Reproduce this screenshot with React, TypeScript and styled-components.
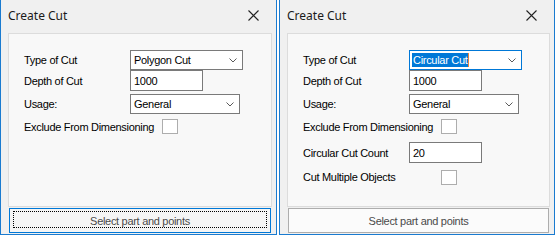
import React from "react";
import styled, { createGlobalStyle, css } from "styled-components";

const Global = createGlobalStyle`
  html, body { margin: 0; padding: 0; background: #ffffff; }
  body { width: 559px; height: 240px; overflow: hidden; }
`;

const Screen = styled.div`
  display: flex;
  gap: 2px;
  align-items: flex-start;
  width: 559px;
  height: 240px;
`;

const Dialog = styled.section<{ $w: number }>`
  width: ${(p) => p.$w}px;
  height: 235px;
  box-sizing: border-box;
  border: 1px solid #1a7bd0;
  border-top: none;
  background: #f0f0f0;
  display: flex;
  flex-direction: column;
`;

const TitleBar = styled.header`
  height: 33px;
  flex: none;
  display: flex;
  align-items: center;
  justify-content: space-between;
  padding: 0 17px 2px 7px;
  box-sizing: border-box;
`;

const Title = styled.span`
  font-family: "Noto Sans", "Segoe UI", sans-serif;
  font-size: 12px;
  color: #1a1a1a;
`;

const CloseIcon = () => (
  <svg width="11" height="11" viewBox="0 0 11 11">
    <path d="M0.5 0.5 L10.5 10.5 M10.5 0.5 L0.5 10.5" stroke="#222" strokeWidth="1.1" fill="none" />
  </svg>
);

const Panel = styled.div`
  height: 174px;
  flex: none;
  box-sizing: border-box;
  margin: 0 4px 0 7px;
  border: 1px solid #dcdcdc;
  background: #f8f8f8;
  padding: 16px 0 0 15px;
  display: flex;
  flex-direction: column;
`;

const Row = styled.div<{ $h: number; $mt?: number }>`
  display: grid;
  grid-template-columns: 106px auto;
  align-items: center;
  height: ${(p) => p.$h}px;
  margin-top: ${(p) => p.$mt ?? 0}px;
`;

const uiText = css`
  font-family: "Liberation Sans", Arial, sans-serif;
  font-size: 11px;
  letter-spacing: -0.3px;
`;

const Label = styled.span`
  ${uiText};
  color: #000;
  white-space: nowrap;
`;

const Combo = styled.div<{ $w: number; $focused?: boolean }>`
  ${uiText};
  color: #000;
  width: ${(p) => p.$w}px;
  height: 100%;
  box-sizing: border-box;
  border: 1px solid ${(p) => (p.$focused ? "#0078d7" : "#7a7a7a")};
  background: #fff;
  display: flex;
  align-items: center;
  justify-content: space-between;
  padding: 0 5px 0 2px;
`;

const Selected = styled.span<{ $sel?: boolean }>`
  display: inline-flex;
  align-items: center;
  height: 14px;
  padding: 0 1px;
  ${(p) =>
    p.$sel &&
    css`
      background: #0078d7;
      color: #fff;
      border-right: 1px solid #e8833a;
    `}
`;

const Chevron = () => (
  <svg width="8" height="5" viewBox="0 0 8 5">
    <path d="M0.5 0.5 L4 4 L7.5 0.5" stroke="#5a5a5a" strokeWidth="1" fill="none" />
  </svg>
);

const TextBox = styled.div`
  ${uiText};
  color: #000;
  width: 73px;
  height: 100%;
  box-sizing: border-box;
  border: 1px solid #7a7a7a;
  background: #fff;
  display: flex;
  align-items: center;
  padding-left: 3px;
`;

const CheckBox = styled.div`
  width: 16px;
  height: 15px;
  box-sizing: border-box;
  border: 1px solid #adadad;
  background: #fff;
  margin-left: 32px;
`;

const ButtonBar = styled.div`
  flex: 1;
  display: flex;
  padding: 1px 5px 1px 8px;
  box-sizing: border-box;
`;

const Button = styled.button<{ $focused?: boolean }>`
  ${uiText};
  flex: 1;
  position: relative;
  box-sizing: border-box;
  color: #4a4a4a;
  padding: 0;
  margin: 0;
  background: ${(p) => (p.$focused ? "#f5f5f5" : "#fbfbfb")};
  border: 1px solid ${(p) => (p.$focused ? "#0078d7" : "#adadad")};
  display: flex;
  align-items: center;
  justify-content: center;
  ${(p) =>
    p.$focused &&
    css`
      &::after {
        content: "";
        position: absolute;
        inset: 2px 3px 4px 3px;
        border: 1px dotted #000;
      }
    `}
`;

type DialogProps = { circular?: boolean; w: number };

const CutDialog = ({ circular, w }: DialogProps) => (
  <Dialog $w={w}>
    <TitleBar>
      <Title>Create Cut</Title>
      <CloseIcon />
    </TitleBar>
    <Panel>
      <Row $h={20}>
        <Label>Type of Cut</Label>
        <Combo $w={113} $focused={circular}>
          <Selected $sel={circular}>{circular ? "Circular Cut" : "Polygon Cut"}</Selected>
          <Chevron />
        </Combo>
      </Row>
      <Row $h={21}>
        <Label>Depth of Cut</Label>
        <TextBox>1000</TextBox>
      </Row>
      <Row $h={20} $mt={3}>
        <Label>Usage:</Label>
        <Combo $w={110}>
          <Selected>General</Selected>
          <Chevron />
        </Combo>
      </Row>
      <Row $h={15} $mt={5}>
        <Label>Exclude From Dimensioning</Label>
        <CheckBox />
      </Row>
      {circular && (
        <>
          <Row $h={21} $mt={8}>
            <Label>Circular Cut Count</Label>
            <TextBox>20</TextBox>
          </Row>
          <Row $h={16} $mt={6}>
            <Label>Cut Multiple Objects</Label>
            <CheckBox />
          </Row>
        </>
      )}
    </Panel>
    <ButtonBar>
      <Button $focused={!circular}>Select part and points</Button>
    </ButtonBar>
  </Dialog>
);

export default function App() {
  return (
    <>
      <Global />
      <Screen>
        <CutDialog w={277} />
        <CutDialog w={276} circular />
      </Screen>
    </>
  );
}
